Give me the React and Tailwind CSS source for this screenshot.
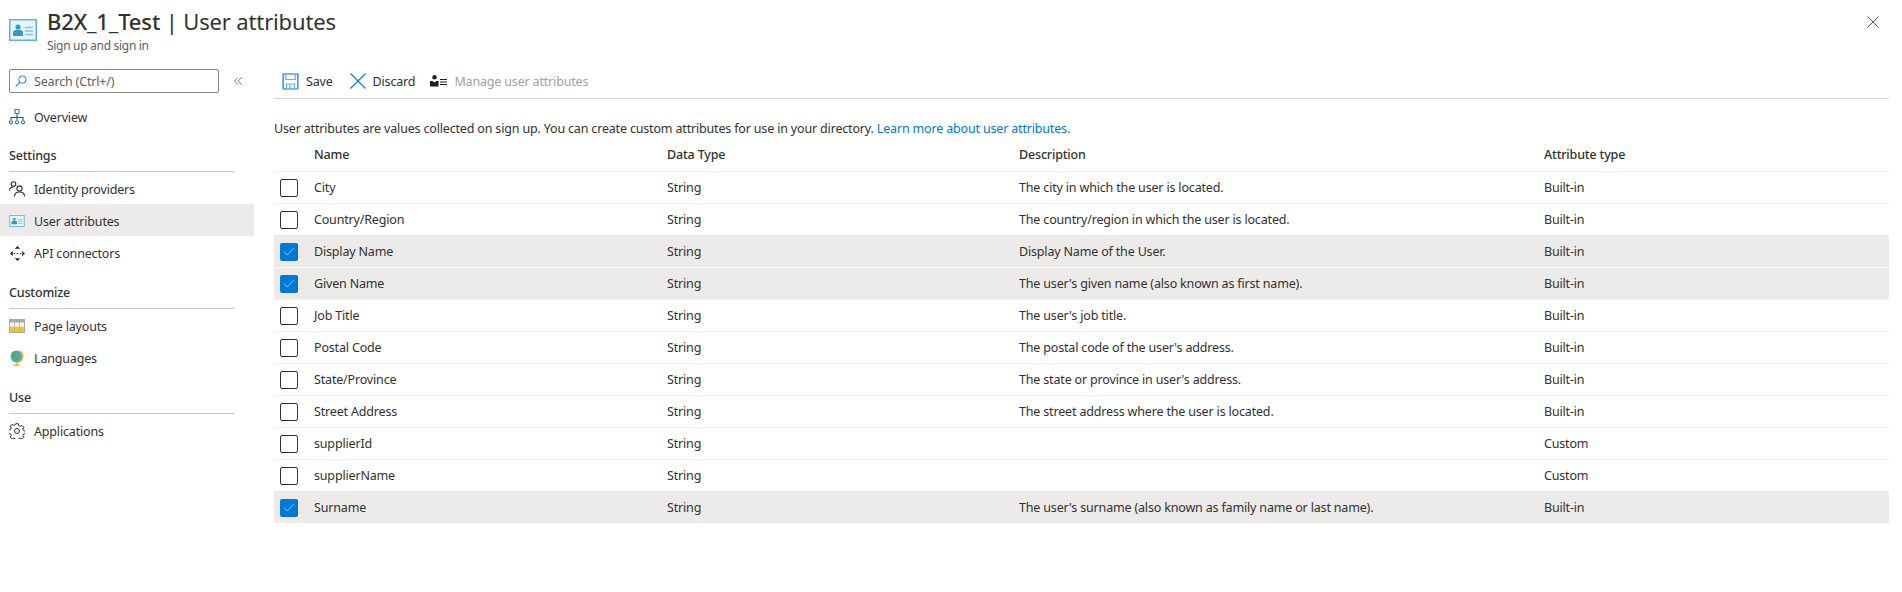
import React from "react";
import { Check } from "lucide-react";

const rows = [
  { name: "City", desc: "The city in which the user is located.", type: "Built-in" },
  { name: "Country/Region", desc: "The country/region in which the user is located.", type: "Built-in" },
  { name: "Display Name", desc: "Display Name of the User.", type: "Built-in", on: true },
  { name: "Given Name", desc: "The user's given name (also known as first name).", type: "Built-in", on: true, afterOn: true },
  { name: "Job Title", desc: "The user's job title.", type: "Built-in" },
  { name: "Postal Code", desc: "The postal code of the user's address.", type: "Built-in" },
  { name: "State/Province", desc: "The state or province in user's address.", type: "Built-in" },
  { name: "Street Address", desc: "The street address where the user is located.", type: "Built-in" },
  { name: "supplierId", desc: "", type: "Custom" },
  { name: "supplierName", desc: "", type: "Custom" },
  { name: "Surname", desc: "The user's surname (also known as family name or last name).", type: "Built-in", on: true },
];

function CardIcon({ className }) {
  return (
    <svg viewBox="0 0 28 22" className={className}>
      <rect x="0" y="0" width="28" height="22" fill="#59b4d9" />
      <rect x="1.5" y="1.5" width="25" height="19" fill="#e8f5fb" />
      <circle cx="9" cy="8" r="2.6" fill="#3999c6" />
      <path d="M4 17v-3.5c0-1.5 1.5-2.5 2.5-2.5h5c1 0 2.500 1 2.500 2.500V17z" fill="#3999c6" />
      <path d="M16 8.500h8M16 12h8M16 15.500h8" stroke="#7fc4e0" strokeWidth="1.500" />
    </svg>
  );
}

function OverviewIcon() {
  return (
    <svg viewBox="0 0 16 16" className="w-4 h-4" fill="none" stroke="#2a7ab8" strokeWidth="1.100">
      <rect x="6" y="0.500" width="4" height="4" rx="0.500" />
      <path d="M8 4.500V8M2 11V8.500h12V11M8 8v3" stroke="#32506b" />
      <circle cx="2" cy="13.300" r="1.600" />
      <circle cx="8" cy="13.300" r="1.600" />
      <circle cx="14" cy="13.300" r="1.600" />
    </svg>
  );
}

function PeopleIcon() {
  return (
    <svg viewBox="0 0 16 16" className="w-4 h-4" fill="none" stroke="#323130" strokeWidth="1.100">
      <circle cx="4.500" cy="3" r="2.300" />
      <path d="M0.500 9.500c0-2 1.500-3.500 4-3.500" />
      <circle cx="10.500" cy="7.500" r="2.600" />
      <path d="M5.500 15.500c0-2.800 2-4.500 5-4.500s5 1.700 5 4.500" />
    </svg>
  );
}

function ConnectorIcon() {
  return (
    <svg viewBox="0 0 16 16" className="w-[15px] h-[15px]" fill="#201f1e">
      <path d="M8 0l2.800 3H5.200zM8 16l-2.800-3h5.600zM0 8l3-2.800v5.600zM16 8l-3 2.800V5.200z" />
      <path d="M4 8h1.500M7.200 8h1.500M10.500 8h1.500" stroke="#201f1e" strokeWidth="1" />
    </svg>
  );
}

function LayoutIcon() {
  return (
    <svg viewBox="0 0 16 14" className="w-4 h-[14px]">
      <rect width="16" height="14" fill="#a8a8a8" />
      <rect x="1" y="3.500" width="14" height="4.500" fill="#f4f4f4" />
      <rect x="1" y="8" width="14" height="5" fill="#f2c82f" />
      <path d="M5.500 3.500V13M10.500 3.500V13" stroke="#a8a8a8" strokeWidth="0.800" />
      <path d="M1 8h14" stroke="#d9c65a" strokeWidth="0.700" />
    </svg>
  );
}

function GlobeIcon() {
  return (
    <svg viewBox="0 0 16 16" className="w-4 h-4">
      <circle cx="7.500" cy="6.500" r="6" fill="#45a5d8" />
      <path d="M3 3.500l3-1.500 2 1-1 2.500 1.500 2-1.500 3.500-1.500-2.500-2.500-1.500z" fill="#5fae3f" />
      <path d="M10 3l2.500 1.500.5 3-2 1z" fill="#6ab548" />
      <path d="M11 0.800c3 1.700 4 5.700 2 8.700-1.500 2.300-4 3.200-6.300 2.800" fill="none" stroke="#f2b821" strokeWidth="1.200" />
      <path d="M7.500 13v1.500M4.500 15.200h6" stroke="#f2b821" strokeWidth="1.400" />
    </svg>
  );
}

function GearIcon() {
  return (
    <svg viewBox="0 0 16 16" className="w-4 h-4" fill="none" stroke="#323130" strokeWidth="1">
      <circle cx="8" cy="8" r="2.500" />
      <path d="M6.700 0.700h2.600l.4 2 1.500.7 1.800-1 1.800 1.800-1 1.800.6 1.500 2 .5v2.600l-2 .4-.7 1.500 1.100 1.800-1.800 1.800-1.800-1-1.500.6-.4 2H6.700l-.5-2-1.400-.6-1.800 1-1.800-1.800 1-1.800-.6-1.500-2-.4V6.900l2-.5.600-1.400-1-1.800 1.800-1.800 1.800 1 1.400-.6z" />
    </svg>
  );
}

function SearchIcon() {
  return (
    <svg viewBox="0 0 14 14" className="w-3 h-3" fill="none" stroke="#0078d4" strokeWidth="1">
      <circle cx="8.700" cy="5.300" r="4.300" />
      <path d="M5.500 8.500L0.800 13.200" strokeWidth="1.300" />
    </svg>
  );
}

function CollapseIcon() {
  return (
    <svg viewBox="0 0 8 8" className="w-2 h-2" fill="none" stroke="#605e5c" strokeWidth="0.800">
      <path d="M4 0.300L0.600 4 4 7.700M7.600 0.300L4.200 4l3.400 3.700" />
    </svg>
  );
}

function SaveIcon() {
  return (
    <svg viewBox="0 0 17 17" className="w-[17px] h-[17px]" fill="none" stroke="#0078d4" strokeWidth="1.200">
      <path d="M1.100 1h14.800v14.200c0 .5-.3.800-.8.800H1.900c-.5 0-.8-.3-.8-.8z" />
      <path d="M3.800 1v5.500h9.400V1" stroke="#59b4d9" />
      <path d="M4.500 16v-5h8v5M8 11v5" stroke="#59b4d9" />
    </svg>
  );
}

function CloseIcon({ className, color }) {
  return (
    <svg viewBox="0 0 16 16" className={className} fill="none" stroke={color} strokeWidth="1.100">
      <path d="M0.500 0.500l15 15M15.500 0.500l-15 15" />
    </svg>
  );
}

function ManageIcon() {
  return (
    <svg viewBox="0 0 17 12" className="w-[17px] h-3" fill="#201f1e">
      <circle cx="4.500" cy="2.300" r="2.200" />
      <path d="M0 11.500V6h2.500l2 1.500 2-1.500H8.500v5.500z" />
      <path d="M10 4.500h7M10 7h7M10 9.500h7" stroke="#201f1e" strokeWidth="1" />
    </svg>
  );
}

function NavItem({ icon, label, active }) {
  return (
    <div className={`h-8 flex items-center pl-[9px] pt-[2px] gap-[9px] ${active ? "bg-[#edebe9]" : ""}`}>
      <div className="w-4 flex justify-center">{icon}</div>
      <span className="pt-[2px]">{label}</span>
    </div>
  );
}

function NavSection({ title, first, children }) {
  return (
    <div>
      <div
        className={`mx-[9px] w-[225px] pb-[6px] flex items-end leading-[18px] font-medium border-b border-[#c8c6c4] ${
          first ? "h-[40px]" : "h-[41px]"
        }`}
      >
        {title}
      </div>
      <div>{children}</div>
    </div>
  );
}

function Row({ row }) {
  let border = "border-[#f3f2f1]";
  if (row.on) border = row.afterOn ? "border-white" : "border-[#edebe9]";
  return (
    <div
      className={`grid grid-cols-[40px_353px_352px_525px_1fr] h-8 items-center border-t ${border} ${
        row.on ? "bg-[#edebe9]" : ""
      }`}
    >
      <div className="pl-[6px]">
        {row.on ? (
          <div className="w-[18px] h-[18px] rounded-[2px] bg-[#0078d4] flex items-center justify-center">
            <Check className="w-[14px] h-[14px] text-white" strokeWidth={1} />
          </div>
        ) : (
          <div className="w-[18px] h-[18px] rounded-[2px] border border-[#323130] bg-white" />
        )}
      </div>
      <div className="pt-[2px]">{row.name}</div>
      <div className="pt-[2px]">String</div>
      <div className="pt-[2px]">{row.desc}</div>
      <div className="pt-[2px]">{row.type}</div>
    </div>
  );
}

export default function App() {
  return (
    <div className="w-[1902px] h-[592px] bg-white text-[#323130] text-[12.5px] tracking-[-0.17px] font-['Noto_Sans',sans-serif] overflow-hidden">
      {/* Title */}
      <div className="h-[60px] flex pl-[9px] pr-[23px] justify-between">
        <div className="flex items-start">
          <CardIcon className="w-7 h-[22px] mt-[19px]" />
          <div className="ml-[10px] pt-[6px]">
            <div className="text-[22px] tracking-[-0.15px] leading-[30px] whitespace-nowrap">
              <span className="font-medium">B2X_1_Test</span> | User attributes
            </div>
            <div className="text-[12px] tracking-[-0.3px] leading-[16px] text-[#605e5c] mt-[2px]">Sign up and sign in</div>
          </div>
        </div>
        <CloseIcon className="w-3 h-3 mt-[16px]" color="#323130" />
      </div>

      <div className="flex">
        {/* Sidebar */}
        <div className="w-[254px] shrink-0">
          <div className="flex items-center pl-[9px] pt-[9px] h-[32px]">
            <div className="w-[210px] h-[24px] border border-[#8a8886] rounded-[2px] flex items-center pl-[5px] gap-[7px] text-[#605e5c]">
              <SearchIcon />
              <span className="pt-[3px]">Search (Ctrl+/)</span>
            </div>
            <div className="ml-[15px]">
              <CollapseIcon />
            </div>
          </div>
          <div className="mt-[8px]">
            <NavItem icon={<OverviewIcon />} label="Overview" />
          </div>
          <NavSection title="Settings" first>
            <NavItem icon={<PeopleIcon />} label="Identity providers" />
            <NavItem icon={<CardIcon className="w-4 h-3" />} label="User attributes" active />
            <NavItem icon={<ConnectorIcon />} label="API connectors" />
          </NavSection>
          <NavSection title="Customize">
            <NavItem icon={<LayoutIcon />} label="Page layouts" />
            <NavItem icon={<GlobeIcon />} label="Languages" />
          </NavSection>
          <NavSection title="Use">
            <NavItem icon={<GearIcon />} label="Applications" />
          </NavSection>
        </div>

        {/* Main */}
        <div className="ml-[20px] w-[1615px]">
          <div className="h-[39px] flex items-center border-b border-[#d6d6d6] pl-[8px] pt-[4px]">
            <SaveIcon />
            <span className="ml-[7px] pt-[2px]">Save</span>
            <div className="ml-[17px]">
              <CloseIcon className="w-4 h-4" color="#0078d4" />
            </div>
            <span className="ml-[7px] pt-[2px]">Discard</span>
            <div className="ml-[15px]">
              <ManageIcon />
            </div>
            <span className="ml-[7px] pt-[2px] text-[#a19f9d]">Manage user attributes</span>
          </div>
          <div className="mt-[20px] leading-[20px]">
            User attributes are values collected on sign up. You can create custom attributes for use in your directory.{" "}
            <span className="text-[#0078d4]">Learn more about user attributes.</span>
          </div>
          <div className="grid grid-cols-[40px_353px_352px_525px_1fr] h-[32px] items-center font-medium pt-[1px]">
            <div />
            <div>Name</div>
            <div>Data Type</div>
            <div>Description</div>
            <div>Attribute type</div>
          </div>
          {rows.map((row) => (
            <Row key={row.name} row={row} />
          ))}
        </div>
      </div>
    </div>
  );
}
